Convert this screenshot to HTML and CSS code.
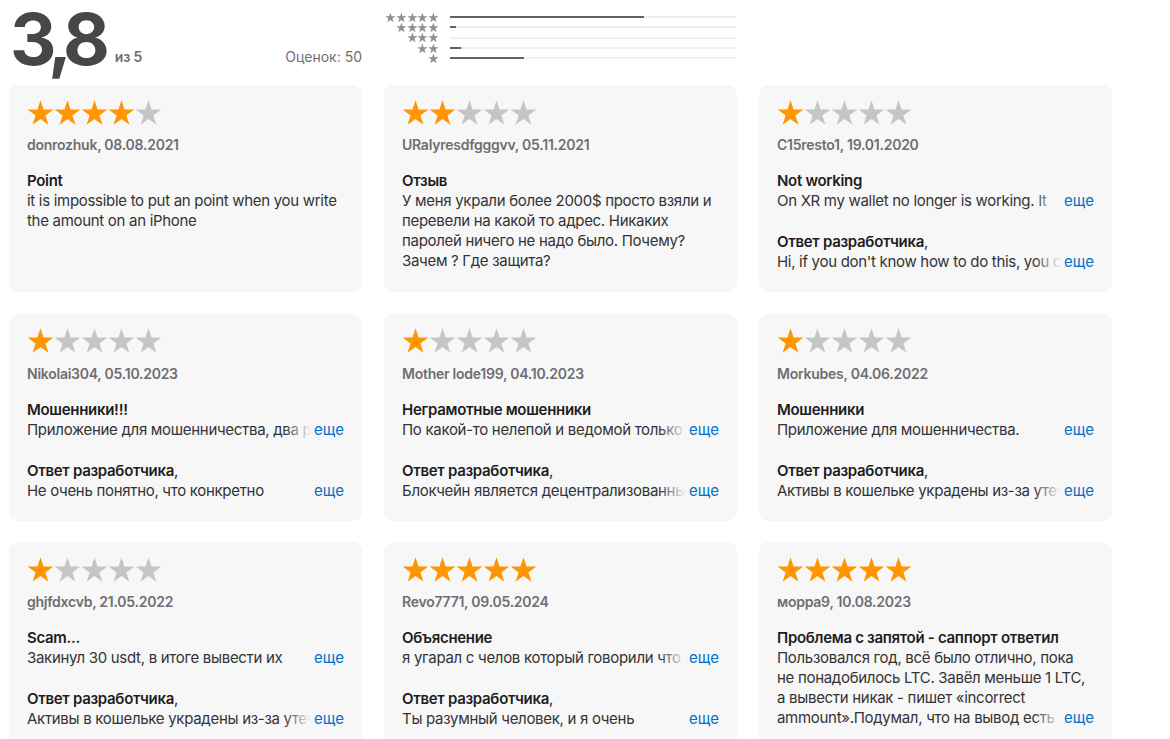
FILE: index.html
```html
<!DOCTYPE html>
<html lang="ru">
<head>
<meta charset="utf-8">
<title>Оценки и отзывы</title>
<link rel="stylesheet" href="styles.css">
</head>
<body>
<svg class="defs" width="0" height="0" aria-hidden="true">
  <defs>
    <symbol id="star" viewBox="0 0 24 24">
      <polygon points="12,1.15 14.69,9.44 23.41,9.44 16.36,14.57 19.05,22.86 12,17.73 4.95,22.86 7.64,14.57 0.59,9.44 9.31,9.44"/>
    </symbol>
  </defs>
</svg>
<div class="page">
  <section class="summary">
    <div class="avg">
      <div class="avg-main">
        <span class="avg-num">3,8</span>
        <span class="avg-of">из 5</span>
      </div>
      <span class="avg-count">Оценок: 50</span>
    </div>
    <div class="hist">
      <div class="hist-row">
        <span class="hist-stars"><svg><use href="#star"/></svg><svg><use href="#star"/></svg><svg><use href="#star"/></svg><svg><use href="#star"/></svg><svg><use href="#star"/></svg></span>
        <span class="bar"><span class="fill" style="width:68%"></span></span>
      </div>
      <div class="hist-row">
        <span class="hist-stars"><svg><use href="#star"/></svg><svg><use href="#star"/></svg><svg><use href="#star"/></svg><svg><use href="#star"/></svg></span>
        <span class="bar"><span class="fill" style="width:2%"></span></span>
      </div>
      <div class="hist-row">
        <span class="hist-stars"><svg><use href="#star"/></svg><svg><use href="#star"/></svg><svg><use href="#star"/></svg></span>
        <span class="bar"><span class="fill" style="width:0%"></span></span>
      </div>
      <div class="hist-row">
        <span class="hist-stars"><svg><use href="#star"/></svg><svg><use href="#star"/></svg></span>
        <span class="bar"><span class="fill" style="width:4%"></span></span>
      </div>
      <div class="hist-row">
        <span class="hist-stars"><svg><use href="#star"/></svg></span>
        <span class="bar"><span class="fill" style="width:26%"></span></span>
      </div>
    </div>
  </section>

  <section class="reviews">
    <article class="card">
      <div class="stars"><svg class="on"><use href="#star"/></svg><svg class="on"><use href="#star"/></svg><svg class="on"><use href="#star"/></svg><svg class="on"><use href="#star"/></svg><svg><use href="#star"/></svg></div>
      <div class="meta">donrozhuk, 08.08.2021</div>
      <h3 class="title">Point</h3>
      <p class="text">it is impossible to put an point when you write the amount on an iPhone</p>
    </article>

    <article class="card">
      <div class="stars"><svg class="on"><use href="#star"/></svg><svg class="on"><use href="#star"/></svg><svg><use href="#star"/></svg><svg><use href="#star"/></svg><svg><use href="#star"/></svg></div>
      <div class="meta">URalyresdfgggvv, 05.11.2021</div>
      <h3 class="title">Отзыв</h3>
      <p class="text">У меня украли более 2000$ просто взяли и перевели на какой то адрес. Никаких паролей ничего не надо было. Почему? Зачем ? Где защита?</p>
    </article>

    <article class="card">
      <div class="stars"><svg class="on"><use href="#star"/></svg><svg><use href="#star"/></svg><svg><use href="#star"/></svg><svg><use href="#star"/></svg><svg><use href="#star"/></svg></div>
      <div class="meta">C15resto1, 19.01.2020</div>
      <h3 class="title">Not working</h3>
      <p class="text clamp">On XR my wallet no longer is working. It crashes right after launch.<a class="more" href="#">еще</a></p>
      <h3 class="title reply">Ответ разработчика<span class="comma">,</span></h3>
      <p class="text clamp">Hi, if you don't know how to do this, you can contact our support team.<a class="more" href="#">еще</a></p>
    </article>

    <article class="card">
      <div class="stars"><svg class="on"><use href="#star"/></svg><svg><use href="#star"/></svg><svg><use href="#star"/></svg><svg><use href="#star"/></svg><svg><use href="#star"/></svg></div>
      <div class="meta">Nikolai304, 05.10.2023</div>
      <h3 class="title">Мошенники!!!</h3>
      <p class="text clamp">Приложение для мошенничества, два раза пытался вывести деньги.<a class="more" href="#">еще</a></p>
      <h3 class="title reply">Ответ разработчика<span class="comma">,</span></h3>
      <p class="text clamp">Не очень понятно, что конкретно подразумевается под мошенничеством.<a class="more" href="#">еще</a></p>
    </article>

    <article class="card">
      <div class="stars"><svg class="on"><use href="#star"/></svg><svg><use href="#star"/></svg><svg><use href="#star"/></svg><svg><use href="#star"/></svg><svg><use href="#star"/></svg></div>
      <div class="meta">Mother lode199, 04.10.2023</div>
      <h3 class="title">Неграмотные мошенники</h3>
      <p class="text clamp">По какой-то нелепой и ведомой только им причине не работает вывод.<a class="more" href="#">еще</a></p>
      <h3 class="title reply">Ответ разработчика<span class="comma">,</span></h3>
      <p class="text clamp">Блокчейн является децентрализованным реестром транзакций.<a class="more" href="#">еще</a></p>
    </article>

    <article class="card">
      <div class="stars"><svg class="on"><use href="#star"/></svg><svg><use href="#star"/></svg><svg><use href="#star"/></svg><svg><use href="#star"/></svg><svg><use href="#star"/></svg></div>
      <div class="meta">Morkubes, 04.06.2022</div>
      <h3 class="title">Мошенники</h3>
      <p class="text clamp">Приложение для мошенничества.<a class="more" href="#">еще</a></p>
      <h3 class="title reply">Ответ разработчика<span class="comma">,</span></h3>
      <p class="text clamp">Активы в кошельке украдены из-за утечки сид-фразы.<a class="more" href="#">еще</a></p>
    </article>

    <article class="card">
      <div class="stars"><svg class="on"><use href="#star"/></svg><svg><use href="#star"/></svg><svg><use href="#star"/></svg><svg><use href="#star"/></svg><svg><use href="#star"/></svg></div>
      <div class="meta">ghjfdxcvb, 21.05.2022</div>
      <h3 class="title">Scam...</h3>
      <p class="text clamp">Закинул 30 usdt, в итоге вывести их невозможно.<a class="more" href="#">еще</a></p>
      <h3 class="title reply">Ответ разработчика<span class="comma">,</span></h3>
      <p class="text clamp">Активы в кошельке украдены из-за утечки сид-фразы.<a class="more" href="#">еще</a></p>
    </article>

    <article class="card">
      <div class="stars"><svg class="on"><use href="#star"/></svg><svg class="on"><use href="#star"/></svg><svg class="on"><use href="#star"/></svg><svg class="on"><use href="#star"/></svg><svg class="on"><use href="#star"/></svg></div>
      <div class="meta">Revo7771, 09.05.2024</div>
      <h3 class="title">Объяснение</h3>
      <p class="text clamp">я угарал с челов который говорили что это скам.<a class="more" href="#">еще</a></p>
      <h3 class="title reply">Ответ разработчика<span class="comma">,</span></h3>
      <p class="text clamp">Ты разумный человек, и я очень признательна за отзыв.<a class="more" href="#">еще</a></p>
    </article>

    <article class="card">
      <div class="stars"><svg class="on"><use href="#star"/></svg><svg class="on"><use href="#star"/></svg><svg class="on"><use href="#star"/></svg><svg class="on"><use href="#star"/></svg><svg class="on"><use href="#star"/></svg></div>
      <div class="meta">морра9, 10.08.2023</div>
      <h3 class="title">Проблема с запятой - саппорт ответил</h3>
      <p class="text clamp4">Пользовался год, всё было отлично, пока не понадобилось LTC. Завёл меньше 1 LTC, а вывести никак - пишет «incorrect ammount».Подумал, что на вывод есть минимальная сумма.<a class="more" href="#">еще</a></p>
    </article>
  </section>
</div>
</body>
</html>
```

FILE: styles.css
```css
html {
  overflow: hidden;
}

body {
  margin: 0;
  background: #ffffff;
  font-family: Inter, "Noto Sans", "Liberation Sans", sans-serif;
  color: #1d1d1f;
}

.defs {
  position: absolute;
  width: 0;
  height: 0;
}

.page {
  padding-left: 9px;
}

/* ---------- summary ---------- */
.summary {
  display: grid;
  grid-template-columns: 353px 353px;
  column-gap: 22px;
  height: 85px;
}

.avg {
  display: flex;
  align-items: flex-end;
  justify-content: space-between;
  height: 75px;
}

.avg-main {
  display: flex;
  align-items: flex-end;
}

.avg-num {
  font-size: 72px;
  line-height: 72px;
  font-weight: 700;
  letter-spacing: -7px;
  color: #47474a;
  margin-left: 1px;
}

.avg-of {
  font-size: 14px;
  line-height: 20px;
  font-weight: 600;
  letter-spacing: -0.2px;
  color: #6e6e73;
  margin: 0 0 8px 12px;
}

.avg-count {
  font-size: 14px;
  line-height: 20px;
  color: #6e6e73;
  margin-bottom: 8px;
}

.hist {
  padding-top: 12px;
}

.hist-row {
  display: flex;
  align-items: center;
  height: 10.3px;
}

.hist-stars {
  width: 55px;
  display: flex;
  justify-content: flex-end;
}

.hist-stars svg {
  width: 10.8px;
  height: 10.8px;
  fill: #8e8e93;
}

.bar {
  margin-left: 11px;
  width: 286px;
  height: 2px;
  background: #efeff2;
  display: block;
}

.fill {
  display: block;
  height: 100%;
  background: #636366;
}

/* ---------- reviews ---------- */
.reviews {
  display: grid;
  grid-template-columns: repeat(3, 353px);
  grid-auto-rows: 207px;
  column-gap: 22px;
  row-gap: 21.5px;
}

.card {
  background: #f7f7f7;
  border-radius: 9px;
  padding: 14px 18px 20px;
  overflow: hidden;
}

.stars {
  display: flex;
  height: 26px;
}

.stars svg {
  flex: none;
  width: 27px;
  height: 27px;
  margin-top: -0.5px;
  fill: #c5c5c7;
}

.stars svg.on {
  fill: #ff9500;
}

.meta {
  margin-top: 10px;
  font-size: 14px;
  line-height: 20px;
  font-weight: 600;
  letter-spacing: -0.25px;
  color: #6e6e73;
}

.title {
  margin: 16px 0 0;
  font-size: 15px;
  line-height: 20px;
  font-weight: 600;
  letter-spacing: -0.3px;
  color: #1d1d1f;
}

.title.reply {
  margin-top: 21px;
}

.comma {
  font-weight: 400;
}

.text {
  margin: 0;
  font-size: 15px;
  line-height: 20px;
  letter-spacing: -0.3px;
  color: #333336;
  position: relative;
}

.clamp {
  max-height: 20px;
  overflow: hidden;
}

.clamp4 {
  max-height: 80px;
  overflow: hidden;
}

.more {
  position: absolute;
  right: 0;
  bottom: 0;
  padding-left: 30px;
  letter-spacing: 0;
  color: #0070c9;
  text-decoration: none;
  background: linear-gradient(to right, rgba(247, 247, 247, 0) 0, #f7f7f7 27px);
}
```
